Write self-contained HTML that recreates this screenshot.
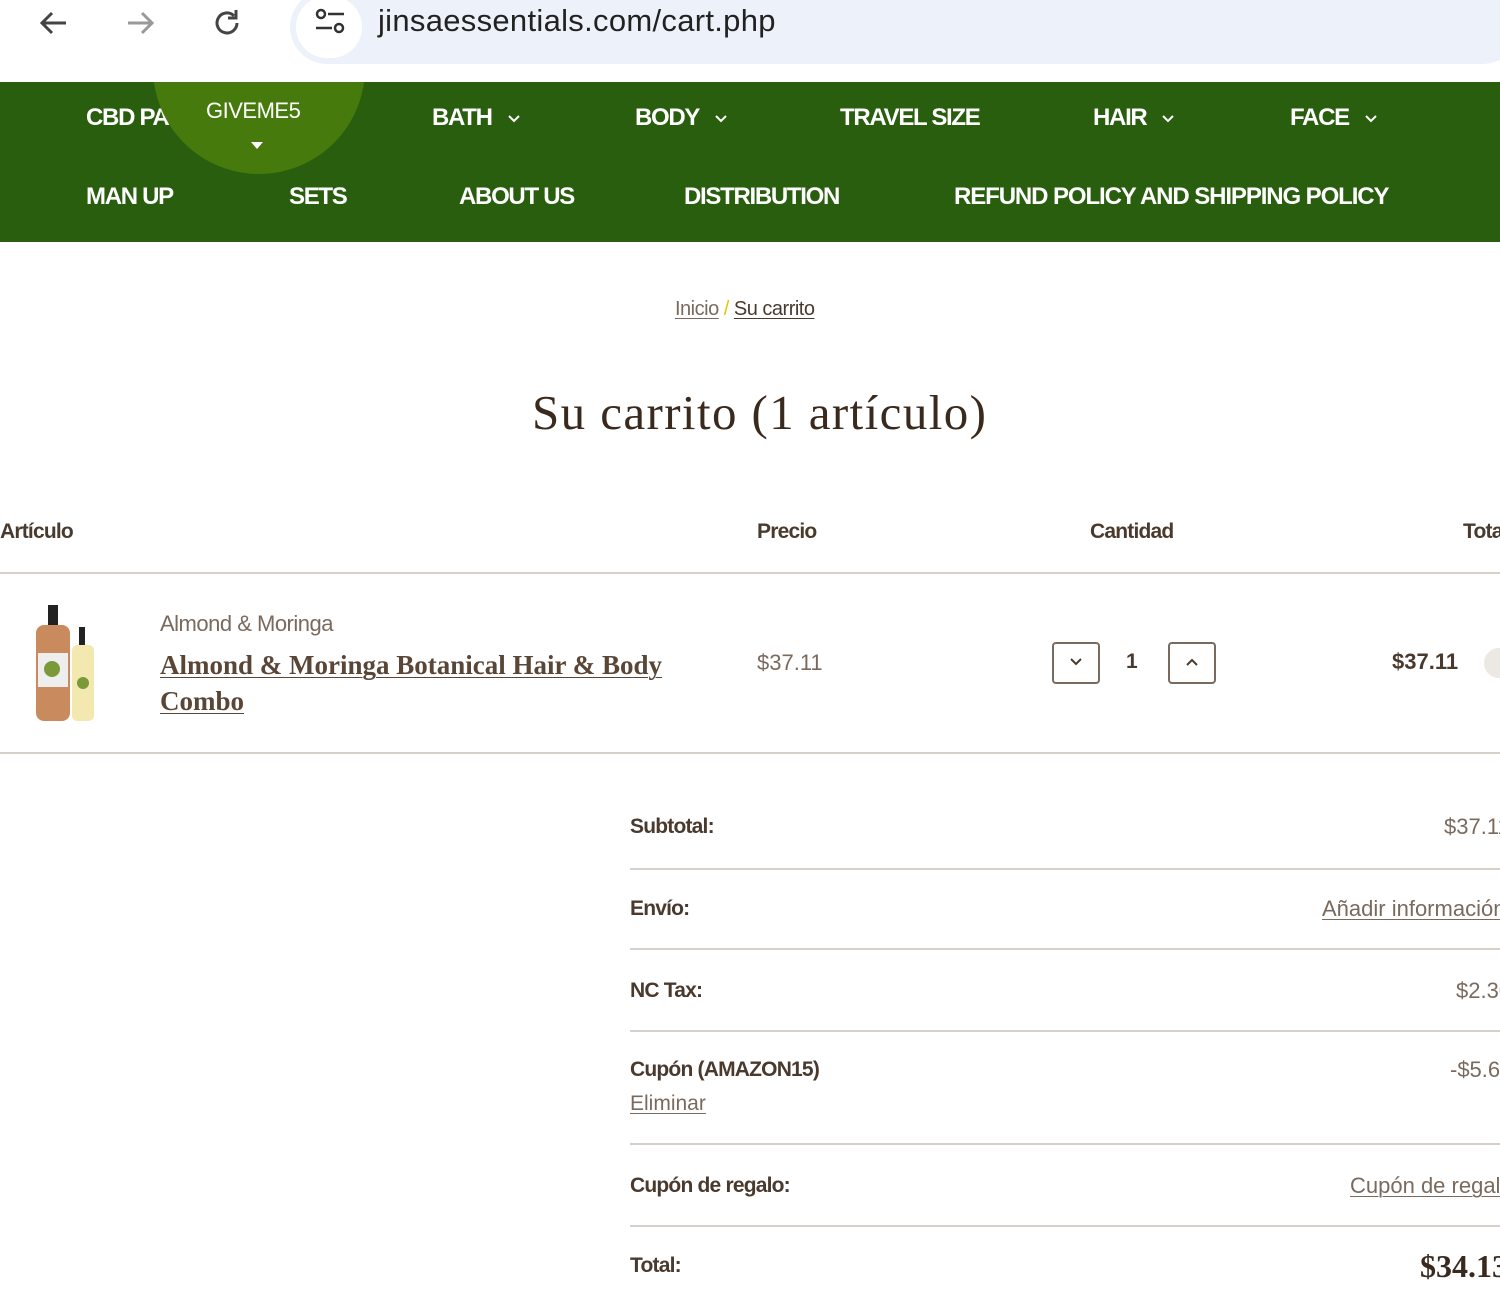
<!DOCTYPE html>
<html><head><meta charset="utf-8"><style>
body{margin:0;width:1500px;height:1297px;overflow:hidden;background:#fff;font-family:"Liberation Sans",sans-serif;color:#4a3a2e;position:relative}
.a{position:absolute;white-space:nowrap}
.nav{position:absolute;left:0;top:82px;width:1500px;height:160px;background:#285e0d;overflow:hidden}
.n{position:absolute;color:#fff;font-weight:bold;font-size:24px;letter-spacing:-1.3px}
.chev{display:inline-block;margin-left:16px;vertical-align:middle}
.serif{font-family:"Liberation Serif",serif}
.h{font-weight:bold;font-size:21px;letter-spacing:-0.8px;color:#4a3a2e}
.line{position:absolute;height:2px;background:#d6d0cb}
u{text-decoration-thickness:1px;text-underline-offset:3px}
.box{position:absolute;width:44px;height:38px;border:2px solid #7a6a5e;border-radius:4px}
.box svg{position:absolute;left:16px;top:14px}
</style></head><body>
<svg class="a" style="left:36px;top:8px" width="36" height="30" viewBox="0 0 36 30"><path d="M30 15H6M16 5L6 15l10 10" stroke="#444" stroke-width="3" fill="none"/></svg>
<svg class="a" style="left:122px;top:8px" width="36" height="30" viewBox="0 0 36 30"><path d="M6 15h24M20 5l10 10-10 10" stroke="#999" stroke-width="3" fill="none"/></svg>
<svg class="a" style="left:210px;top:6px" width="34" height="34" viewBox="0 0 34 34"><path d="M27 17a10 10 0 1 1-3-7.2" stroke="#444" stroke-width="3" fill="none"/><path d="M26 4v8h-8" stroke="#444" stroke-width="3" fill="none"/></svg>
<div class="a" style="left:290px;top:-10px;width:1230px;height:74px;background:#edf2fa;border-radius:37px"></div>
<div class="a" style="left:296px;top:-4px;width:66px;height:62px;background:#fff;border-radius:31px"></div>
<svg class="a" style="left:312px;top:6px" width="36" height="32" viewBox="0 0 36 32"><circle cx="9" cy="8" r="4" stroke="#333" stroke-width="2.5" fill="none"/><path d="M16 8h16M4 22h16" stroke="#333" stroke-width="2.5"/><circle cx="27" cy="22" r="4" stroke="#333" stroke-width="2.5" fill="none"/></svg>
<div class="a" style="left:378px;top:3px;font-size:31px;color:#222;letter-spacing:0.3px">jinsaessentials.com/cart.php</div>
<div class="nav">
<div class="n" style="left:86px;top:22px">CBD PA</div>
<div class="a" style="left:153px;top:-110px;width:212px;height:202px;border-radius:0 0 106px 106px;background:#467a0c"></div>
<div class="a" style="left:206px;top:16px;color:#fff;font-size:22px;letter-spacing:-0.5px">GIVEME5</div>
<div class="a" style="left:251px;top:60px;width:0;height:0;border-left:6px solid transparent;border-right:6px solid transparent;border-top:7px solid #fff"></div>
<div class="n" style="left:432px;top:22px">BATH<svg class="chev" width="12" height="8"><path d="M1 1l5 5 5-5" stroke="#fff" stroke-width="2" fill="none"/></svg></div>
<div class="n" style="left:635px;top:22px">BODY<svg class="chev" width="12" height="8"><path d="M1 1l5 5 5-5" stroke="#fff" stroke-width="2" fill="none"/></svg></div>
<div class="n" style="left:840px;top:22px">TRAVEL SIZE</div>
<div class="n" style="left:1093px;top:22px">HAIR<svg class="chev" width="12" height="8"><path d="M1 1l5 5 5-5" stroke="#fff" stroke-width="2" fill="none"/></svg></div>
<div class="n" style="left:1290px;top:22px">FACE<svg class="chev" width="12" height="8"><path d="M1 1l5 5 5-5" stroke="#fff" stroke-width="2" fill="none"/></svg></div>
<div class="n" style="left:86px;top:101px">MAN UP</div>
<div class="n" style="left:289px;top:101px">SETS</div>
<div class="n" style="left:459px;top:101px">ABOUT US</div>
<div class="n" style="left:684px;top:101px">DISTRIBUTION</div>
<div class="n" style="left:954px;top:101px;letter-spacing:-1.1px">REFUND POLICY AND SHIPPING POLICY</div>
</div>
<div class="a" style="left:675px;top:298px;font-size:20px;letter-spacing:-0.5px;color:#7a6a5e"><u>Inicio</u> <span style="color:#e8c400">/</span> <u style="color:#4a3a2e">Su carrito</u></div>
<div class="a serif" style="left:532px;top:384px;font-size:49px;color:#3a2a1e;letter-spacing:1.4px">Su carrito (1 artículo)</div>
<div class="a h" style="left:0;top:520px">Artículo</div>
<div class="a h" style="left:757px;top:520px">Precio</div>
<div class="a h" style="left:1090px;top:520px">Cantidad</div>
<div class="a h" style="left:1463px;top:520px">Total</div>
<div class="line" style="left:0;top:572px;width:1500px"></div>
<svg class="a" style="left:30px;top:603px" width="70" height="120" viewBox="0 0 70 120"><rect x="18" y="2" width="10" height="22" fill="#222"/><rect x="6" y="22" width="34" height="96" rx="8" fill="#c98a5e"/><rect x="8" y="50" width="30" height="34" fill="#eee"/><circle cx="22" cy="66" r="8" fill="#7a9a3a"/><rect x="49" y="24" width="6" height="20" fill="#222"/><rect x="42" y="42" width="22" height="76" rx="5" fill="#f3e9b0"/><circle cx="53" cy="80" r="6" fill="#7a9a3a"/></svg>
<div class="a" style="left:160px;top:611px;font-size:22px;color:#7a6a5e;letter-spacing:-0.5px">Almond &amp; Moringa</div>
<div class="a serif" style="left:160px;top:647px;font-size:27px;line-height:36px;font-weight:bold;color:#5a4636;white-space:normal;width:540px"><u>Almond &amp; Moringa Botanical Hair &amp; Body Combo</u></div>
<div class="a" style="left:757px;top:650px;font-size:22px;color:#7a6a5e">$37.11</div>
<div class="box" style="left:1052px;top:642px"><svg width="12" height="8"><path d="M1 1l5 5 5-5" stroke="#4a3a2e" stroke-width="2" fill="none"/></svg></div>
<div class="a" style="left:1126px;top:650px;font-size:21px;font-weight:bold">1</div>
<div class="box" style="left:1168px;top:642px"><svg width="12" height="8"><path d="M1 7l5-5 5 5" stroke="#4a3a2e" stroke-width="2" fill="none"/></svg></div>
<div class="a" style="left:1392px;top:649px;font-size:22px;font-weight:bold">$37.11</div>
<div class="a" style="left:1484px;top:648px;width:30px;height:30px;border-radius:15px;background:#ece8e4"></div>
<div class="line" style="left:0;top:752px;width:1500px"></div>
<div class="a h" style="left:630px;top:815px">Subtotal:</div><div class="a" style="left:1444px;top:814px;font-size:22px;color:#7a6a5e">$37.11</div>
<div class="line" style="left:630px;top:868px;width:870px"></div>
<div class="a h" style="left:630px;top:897px">Envío:</div><div class="a" style="left:1322px;top:896px;font-size:22px;color:#7a6a5e"><u>Añadir información</u></div>
<div class="line" style="left:630px;top:948px;width:870px"></div>
<div class="a h" style="left:630px;top:979px">NC Tax:</div><div class="a" style="left:1456px;top:978px;font-size:22px;color:#7a6a5e">$2.30</div>
<div class="line" style="left:630px;top:1030px;width:870px"></div>
<div class="a h" style="left:630px;top:1058px">Cupón (AMAZON15)</div><div class="a" style="left:1450px;top:1057px;font-size:22px;color:#7a6a5e">-$5.60</div>
<div class="a" style="left:630px;top:1092px;font-size:21px;color:#7a6a5e"><u>Eliminar</u></div>
<div class="line" style="left:630px;top:1143px;width:870px"></div>
<div class="a h" style="left:630px;top:1174px">Cupón de regalo:</div><div class="a" style="left:1350px;top:1173px;font-size:22px;color:#7a6a5e"><u>Cupón de regalo</u></div>
<div class="line" style="left:630px;top:1225px;width:870px"></div>
<div class="a h" style="left:630px;top:1254px">Total:</div><div class="a serif" style="left:1420px;top:1248px;font-size:32px;font-weight:bold;color:#3a2a1e">$34.13</div>
</body></html>
